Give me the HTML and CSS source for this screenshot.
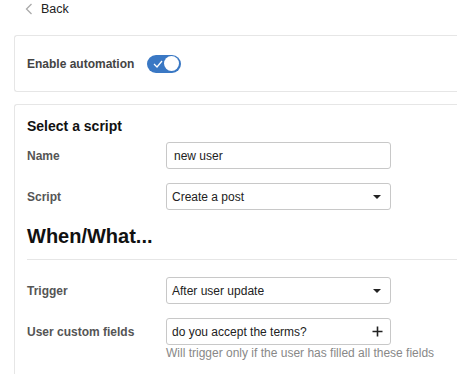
FILE: index.html
```html
<!DOCTYPE html>
<html>
<head>
    <meta charset="utf-8" />
    <title>Automation</title>
    <link rel="stylesheet" href="styles.css">
</head>
<body>
    <div class="oldal">
        <div class="vissza">
            <svg class="nyil" width="8" height="12" viewBox="0 0 8 12"><path d="M6.5 1 L1.5 6 L6.5 11" fill="none" stroke="#aaa" stroke-width="1.3"/></svg>
            <span>Back</span>
        </div>

        <div class="kartya kartya-kapcsolo">
            <span class="cimke-nagy">Enable automation</span>
            <span class="kapcsolo">
                <svg class="pipa" width="10" height="8" viewBox="0 0 10 8"><path d="M1 4 L4 7 L9 1" fill="none" stroke="#fff" stroke-width="1.3"/></svg>
                <span class="gomb"></span>
            </span>
        </div>

        <div class="kartya kartya-urlap">
            <h3>Select a script</h3>
            <div class="sor">
                <label>Name</label>
                <div class="mezo">new user</div>
            </div>
            <div class="sor">
                <label>Script</label>
                <div class="mezo valaszto">Create a post <span class="lefele"></span></div>
            </div>

            <h2>When/What...</h2>
            <div class="elvalaszto"></div>

            <div class="sor">
                <label>Trigger</label>
                <div class="mezo valaszto">After user update <span class="lefele"></span></div>
            </div>
            <div class="sor sor-sugo">
                <label>User custom fields</label>
                <div>
                    <div class="mezo valaszto">do you accept the terms?
                        <svg class="plusz" width="11" height="11" viewBox="0 0 11 11"><path d="M5.5 0.5 V10.5 M0.5 5.5 H10.5" stroke="#222" stroke-width="1.6"/></svg>
                    </div>
                    <div class="sugo">Will trigger only if the user has filled all these fields</div>
                </div>
            </div>
        </div>
    </div>
</body>
</html>
```

FILE: styles.css
```css
html, body {
    margin: 0;
    height: 100%;
    overflow: hidden;
    background-color: #fff;
    font-family: "Liberation Sans", Arial, sans-serif;
    color: #222;
}

.vissza {
    display: flex;
    align-items: center;
    gap: 8px;
    padding-left: 25px;
    height: 17px;
    font-size: 12.5px;
    color: #222;
}

.nyil {
    margin-top: 1px;
}

.kartya {
    margin-left: 14px;
    border: 1px solid #e6e6e6;
    border-right: none;
    border-radius: 3px 0 0 3px;
    background-color: #fff;
}

.kartya-kapcsolo {
    margin-top: 18px;
    height: 55px;
    display: flex;
    align-items: center;
    padding-left: 12px;
}

.cimke-nagy {
    font-size: 12px;
    font-weight: bold;
    color: #444;
    margin-right: 13px;
    margin-top: 1px;
}

.kapcsolo {
    position: relative;
    display: inline-block;
    width: 34px;
    height: 18px;
    border-radius: 9px;
    background-color: #3a78c4;
}

.pipa {
    position: absolute;
    left: 6px;
    top: 5px;
}

.gomb {
    position: absolute;
    right: 2px;
    top: 1.5px;
    width: 15px;
    height: 15px;
    border-radius: 50%;
    background-color: #fff;
}

.kartya-urlap {
    margin-top: 12px;
    padding: 13px 0 20px 12px;
    border-bottom: none;
}

h3 {
    margin: 0 0 7px 0;
    font-size: 14px;
    line-height: 17px;
    color: #111;
}

h2 {
    margin: 15px 0 0 0;
    font-size: 20px;
    line-height: 23px;
    color: #111;
}

.elvalaszto {
    margin-top: 11px;
    border-top: 1px solid #e6e6e6;
}

.sor {
    display: grid;
    grid-template-columns: 139px 225px;
    align-items: center;
    margin-bottom: 14px;
}

.sor-sugo {
    align-items: start;
    margin-top: 1px;
    margin-bottom: 0;
}

.sor-sugo label {
    margin-top: 7px;
}

.elvalaszto + .sor {
    margin-top: 17px;
}

label {
    font-size: 12px;
    font-weight: bold;
    color: #555;
}

.mezo {
    box-sizing: border-box;
    height: 27px;
    border: 1px solid #c8c8c8;
    border-radius: 3px;
    padding: 0 7px;
    display: flex;
    align-items: center;
    font-size: 12px;
    color: #222;
}

.valaszto {
    padding-left: 5px;
    justify-content: space-between;
}

.lefele {
    width: 0;
    height: 0;
    border-left: 4px solid transparent;
    border-right: 4px solid transparent;
    border-top: 4px solid #222;
    margin-right: 2px;
}

.plusz {
    margin-right: 0;
}

.sugo {
    margin-top: 1px;
    font-size: 12px;
    line-height: 14px;
    color: #888;
    white-space: nowrap;
}
```
